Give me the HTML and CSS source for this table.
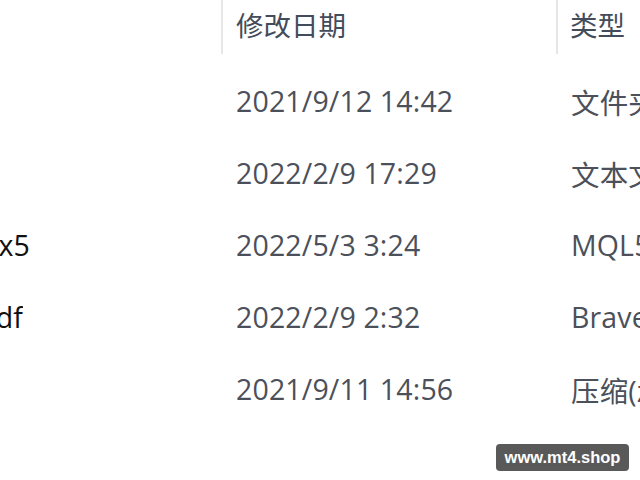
FILE: index.html
```html
<!DOCTYPE html>
<html lang="zh-CN">
<head>
<meta charset="utf-8">
<link rel="stylesheet" href="styles.css">
</head>
<body>
<div class="list">
  <div class="header">
    <div class="hcell name"></div>
    <div class="hcell date sep">修改日期</div>
    <div class="hcell type sep">类型</div>
  </div>
  <div class="row">
    <div class="cell name"></div>
    <div class="cell date">2021/9/12 14:42</div>
    <div class="cell type">文件夹</div>
  </div>
  <div class="row">
    <div class="cell name"></div>
    <div class="cell date">2022/2/9 17:29</div>
    <div class="cell type">文本文档</div>
  </div>
  <div class="row">
    <div class="cell name"><div class="fname"><span>x5</span></div></div>
    <div class="cell date">2022/5/3 3:24</div>
    <div class="cell type">MQL5 Source File</div>
  </div>
  <div class="row">
    <div class="cell name"><div class="fname short"><span>df</span></div></div>
    <div class="cell date">2022/2/9 2:32</div>
    <div class="cell type">Brave HTML Document</div>
  </div>
  <div class="row">
    <div class="cell name"></div>
    <div class="cell date">2021/9/11 14:56</div>
    <div class="cell type">压缩(zipped)文件夹</div>
  </div>
</div>
<div class="badge">www.mt4.shop</div>
</body>
</html>
```

FILE: styles.css
```css
html, body {
  margin: 0;
  padding: 0;
  background: #ffffff;
  width: 640px;
  height: 480px;
  overflow: hidden;
}
body {
  position: relative;
  font-family: "Open Sans", "Noto Sans CJK SC", sans-serif;
}
.list {
  display: flex;
  flex-direction: column;
}
.header, .row {
  display: grid;
  grid-template-columns: 221px 335px 84px;
  white-space: nowrap;
}
.header {
  height: 65px;
}
.hcell {
  position: relative;
  height: 54px;
  box-sizing: border-box;
  padding-bottom: 6px;
  display: flex;
  align-items: center;
  font-family: "Noto Sans CJK SC", sans-serif;
  font-size: 27.5px;
  color: #434c5a;
  overflow: hidden;
}
.hcell.date { padding-left: 15px; }
.hcell.type { padding-left: 14px; }
.sep::before {
  content: "";
  position: absolute;
  left: 0;
  top: 0;
  width: 2px;
  height: 54px;
  background: #e6e6e6;
}
.row {
  height: 72px;
  align-items: center;
}
.cell {
  font-size: 28.5px;
  letter-spacing: 0.15px;
  color: #4b505a;
  overflow: hidden;
}
.cell.date { padding-left: 15px; }
.cell.type { padding-left: 15px; }
.cell.name { color: #111111; }
.fname {
  display: flex;
  justify-content: flex-end;
  width: 30px;
  overflow: hidden;
}
.fname span { flex: none; }
.fname.short { width: 23px; }
.badge {
  position: absolute;
  left: 496px;
  top: 444px;
  width: 133px;
  height: 27px;
  border-radius: 4px;
  background: #595959;
  color: #ffffff;
  font-family: "Liberation Sans", sans-serif;
  font-weight: bold;
  font-size: 16.5px;
  display: flex;
  align-items: center;
  justify-content: center;
}
```
